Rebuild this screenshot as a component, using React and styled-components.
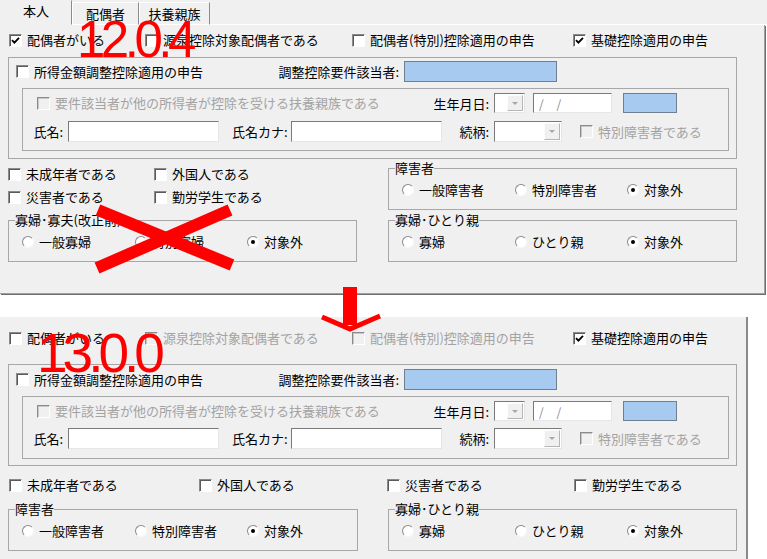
import React from 'react'
import styled, { createGlobalStyle } from 'styled-components'

const GlobalStyle = createGlobalStyle`
  html, body { margin: 0; padding: 0; background: #fff; }
  body {
    font-family: "Noto Sans CJK JP", "Noto Sans", sans-serif;
    font-size: 13px;
    color: #000;
  }
`

function CheckMark() {
  return (
    <svg width="9" height="9" viewBox="0 0 9 9">
      <path d="M1 4.2 L3.4 6.6 L8 1.8" fill="none" stroke="#000" strokeWidth="1.9" />
    </svg>
  )
}

function Check({ checked, disabled, children }) {
  return (
    <CheckItem $disabled={disabled}>
      <CheckBox $disabled={disabled}>{checked && <CheckMark />}</CheckBox>
      {children}
    </CheckItem>
  )
}

function Radio({ on, children }) {
  return (
    <CheckItem>
      <RadioDot $on={on} />
      {children}
    </CheckItem>
  )
}

function RadioGroup({ title, items, selected, mt }) {
  return (
    <Group $mt={mt}>
      <Legend>{title}</Legend>
      <Line $cols="113px 112px auto" $pl={13} $mt={8}>
        {items.map((it, i) => (
          <Radio key={it} on={i === selected}>{it}</Radio>
        ))}
      </Line>
    </Group>
  )
}

// 所得金額調整控除 block (same in both versions, spacing differs a bit)
function AdjustFrame({ v13 }) {
  return (
    <Frame $mt={v13 ? 19 : 10} $pad={v13 ? '4px 0 6px 0' : '3px 0 7px 0'}>
      <Line $cols="257px 131px 153px" $h={21} $pl={7}>
        <Check>所得金額調整控除適用の申告</Check>
        <Caption>調整控除要件該当者:</Caption>
        <BlueBox $w={153} />
      </Line>
      <InnerFrame $pad={v13 ? '4px 0 9px 0' : '4px 0 8px 0'}>
        <Line $cols="390px 67px 39px 90px 54px" $h={20} $pl={14}>
          <Check disabled>要件該当者が他の所得者が控除を受ける扶養親族である</Check>
          <Caption>生年月日:</Caption>
          <Combo $w={31}><ComboButton /></Combo>
          <TextBox $w={79}><DateMask>/ /</DateMask></TextBox>
          <BlueBox $w={54} />
        </Line>
        <Line $cols="35px 164px 59px 164px 39px 86px auto" $h={21} $pl={10} $mt={v13 ? 7 : 8}>
          <Caption>氏名:</Caption>
          <TextBox $w={151} />
          <Caption>氏名カナ:</Caption>
          <TextBox $w={151} />
          <Caption>続柄:</Caption>
          <Combo $w={68}><ComboButton /></Combo>
          <Check disabled>特別障害者である</Check>
        </Line>
      </InnerFrame>
    </Frame>
  )
}

export default function App() {
  return (
    <>
      <GlobalStyle />
      <Canvas>
        <TopPanel>
          <TabStrip>
            <Tab $w={72} $active>本人</Tab>
            <Tab $w={67}>配偶者</Tab>
            <Tab $w={71}>扶養親族</Tab>
            <TabFiller />
          </TabStrip>
          <Page>
            <Line $cols="136px 207px 221px auto" $pl={1} $mt={8}>
              <Check checked>配偶者がいる</Check>
              <Check>源泉控除対象配偶者である</Check>
              <Check>配偶者(特別)控除適用の申告</Check>
              <Check checked>基礎控除適用の申告</Check>
            </Line>
            <AdjustFrame />
            <Lower $cols="349px 349px" $gap={31}>
              <Column>
                <Line $cols="146px auto" $mt={8}>
                  <Check>未成年者である</Check>
                  <Check>外国人である</Check>
                </Line>
                <Line $cols="146px auto" $mt={9}>
                  <Check>災害者である</Check>
                  <Check>勤労学生である</Check>
                </Line>
                <RadioGroup mt={9} title="寡婦･寡夫(改正前)" items={['一般寡婦', '特別寡婦', '対象外']} selected={2} />
              </Column>
              <Column>
                <RadioGroup mt={2} title="障害者" items={['一般障害者', '特別障害者', '対象外']} selected={2} />
                <RadioGroup mt={3} title="寡婦･ひとり親" items={['寡婦', 'ひとり親', '対象外']} selected={2} />
              </Column>
            </Lower>
          </Page>
        </TopPanel>

        <BottomPanel>
          <Line $cols="136px 207px 221px auto" $pl={1} $mt={14}>
            <Check>配偶者がいる</Check>
            <Check disabled>源泉控除対象配偶者である</Check>
            <Check disabled>配偶者(特別)控除適用の申告</Check>
            <Check checked>基礎控除適用の申告</Check>
          </Line>
          <AdjustFrame v13 />
          <Line $cols="190px 188px 187px auto" $pl={1} $mt={12}>
            <Check>未成年者である</Check>
            <Check>外国人である</Check>
            <Check>災害者である</Check>
            <Check>勤労学生である</Check>
          </Line>
          <Lower $cols="350px 349px" $gap={30} $mt={10}>
            <RadioGroup title="障害者" items={['一般障害者', '特別障害者', '対象外']} selected={2} />
            <RadioGroup title="寡婦･ひとり親" items={['寡婦', 'ひとり親', '対象外']} selected={2} />
          </Lower>
        </BottomPanel>

        <Version $left={77} $top={14} $size={51} $ls={-4.5}>12.0.4</Version>
        <Version $left={37} $top={326} $size={55} $ls={-5}>13.0.0</Version>
        <CrossMark width="156" height="72" viewBox="0 0 156 72">
          <line x1="10" y1="8" x2="144" y2="63" stroke="#ff0000" strokeWidth="12" />
          <line x1="142" y1="8" x2="9" y2="66" stroke="#ff0000" strokeWidth="12" />
        </CrossMark>
        <DownArrow width="66" height="48" viewBox="0 0 66 48">
          <rect x="25" y="2" width="14" height="38" fill="#ff0000" />
          <polyline points="4,32 32,44 62,31" fill="none" stroke="#ff0000" strokeWidth="5" />
        </DownArrow>
      </Canvas>
    </>
  )
}

const Canvas = styled.div`
  position: relative;
  width: 767px;
  height: 559px;
  overflow: hidden;
  background: #fff;
`

const TopPanel = styled.section`
  height: 294px;
  display: flex;
  flex-direction: column;
`

const TabStrip = styled.div`
  display: flex;
  align-items: flex-end;
  height: 25px;
  background: #f0f0f0;
`

const Tab = styled.div`
  box-sizing: border-box;
  width: ${p => p.$w}px;
  height: ${p => (p.$active ? 25 : 23)}px;
  display: flex;
  align-items: center;
  justify-content: center;
  padding-bottom: ${p => (p.$active ? 4 : 0)}px;
  border-top: 1px solid ${p => (p.$active ? '#f0f0f0' : '#fff')};
  border-left: 1px solid ${p => (p.$active ? '#f0f0f0' : '#fff')};
  border-right: 1px solid #8c8c8c;
  border-bottom: 1px solid ${p => (p.$active ? '#f0f0f0' : '#fff')};
  background: #f0f0f0;
`

const TabFiller = styled.div`
  flex: 1;
  align-self: stretch;
  border-bottom: 1px solid #fff;
`

const Page = styled.div`
  flex: 1;
  box-sizing: border-box;
  width: 765px;
  background: #f0f0f0;
  border-right: 1px solid #a0a0a0;
  border-bottom: 1px solid #a0a0a0;
  box-shadow: 1px 1px 0 #6e6e6e;
  padding-left: 8px;
`

const BottomPanel = styled.section`
  display: flow-root;
  box-sizing: border-box;
  margin-top: 23px;
  width: 748px;
  height: 242px;
  background: #f0f0f0;
  border-right: 2px solid #8a8a8a;
  padding-left: 8px;
`

const Line = styled.div`
  display: grid;
  grid-template-columns: ${p => p.$cols};
  align-items: center;
  height: ${p => p.$h ?? 14}px;
  margin-top: ${p => p.$mt ?? 0}px;
  padding-left: ${p => p.$pl ?? 0}px;
  white-space: nowrap;
`

const Lower = styled.div`
  display: grid;
  grid-template-columns: ${p => p.$cols};
  column-gap: ${p => p.$gap}px;
  margin-top: ${p => p.$mt ?? 0}px;
  align-items: start;
`

const Column = styled.div`
  display: flex;
  flex-direction: column;
`

const Frame = styled.div`
  box-sizing: border-box;
  width: 729px;
  margin-top: ${p => p.$mt}px;
  padding: ${p => p.$pad};
  border: 1px solid #a7a7a7;
`

const InnerFrame = styled.div`
  box-sizing: border-box;
  width: 707px;
  margin: 6px 0 0 13px;
  padding: ${p => p.$pad};
  border: 1px solid #a7a7a7;
`

const Group = styled.fieldset`
  box-sizing: border-box;
  min-width: 0;
  margin: ${p => p.$mt ?? 0}px 0 0 0;
  padding: 0 0 12px 0;
  border: 1px solid #a7a7a7;
`

const Legend = styled.legend`
  margin-left: 6px;
  padding: 0;
  font-size: 13px;
  line-height: 14px;
`

const CheckItem = styled.label`
  display: flex;
  align-items: center;
  gap: 5px;
  line-height: 14px;
  color: ${p => (p.$disabled ? '#a3a3a3' : '#000')};
`

const CheckBox = styled.span`
  flex: none;
  box-sizing: border-box;
  width: 13px;
  height: 13px;
  display: flex;
  align-items: center;
  justify-content: center;
  border: 1px solid;
  border-color: #8a8a8a #fff #fff #8a8a8a;
  box-shadow: inset 1px 1px 0 ${p => (p.$disabled ? '#c8c8c8' : '#5a5a5a')};
  background: ${p => (p.$disabled ? '#f0f0f0' : '#fff')};
`

const RadioDot = styled.span`
  flex: none;
  box-sizing: border-box;
  width: 12px;
  height: 12px;
  border-radius: 50%;
  border: 1px solid;
  border-color: #8a8a8a #f8f8f8 #f8f8f8 #8a8a8a;
  background: #fff;
  display: flex;
  align-items: center;
  justify-content: center;
  &::after {
    content: '';
    width: 4px;
    height: 4px;
    border-radius: 50%;
    background: ${p => (p.$on ? '#000' : 'transparent')};
  }
`

const Caption = styled.span`
  text-align: right;
  padding-right: 5px;
  white-space: nowrap;
`

const TextBox = styled.div`
  box-sizing: border-box;
  width: ${p => p.$w}px;
  height: 100%;
  border: 1px solid;
  border-color: #7a7a7a #e6e6e6 #e6e6e6 #7a7a7a;
  background: #fff;
  display: flex;
  align-items: center;
`

const DateMask = styled.span`
  padding-left: 5px;
  font-size: 12px;
  letter-spacing: 5px;
  color: #8a8a8a;
`

const BlueBox = styled.div`
  box-sizing: border-box;
  width: ${p => p.$w}px;
  height: 100%;
  background: #a6caf0;
  border: 1px solid #6f7f8f;
`

const Combo = styled.div`
  box-sizing: border-box;
  width: ${p => p.$w}px;
  height: 100%;
  border: 1px solid;
  border-color: #7a7a7a #e6e6e6 #e6e6e6 #7a7a7a;
  background: #fff;
  display: flex;
  justify-content: flex-end;
  padding: 1px;
`

const ComboButton = styled.span`
  box-sizing: border-box;
  width: 16px;
  background: #f0f0f0;
  border: 1px solid;
  border-color: #fbfbfb #b5b5b5 #b5b5b5 #fbfbfb;
  display: flex;
  align-items: center;
  justify-content: center;
  &::after {
    content: '';
    border-left: 3px solid transparent;
    border-right: 3px solid transparent;
    border-top: 3px solid #a8a8a8;
  }
`

const Version = styled.div`
  position: absolute;
  left: ${p => p.$left}px;
  top: ${p => p.$top}px;
  font-family: "Liberation Sans", Arial, sans-serif;
  font-size: ${p => p.$size}px;
  line-height: 1;
  letter-spacing: ${p => p.$ls}px;
  color: #ff0000;
  white-space: nowrap;
`

const CrossMark = styled.svg`
  position: absolute;
  left: 88px;
  top: 202px;
`

const DownArrow = styled.svg`
  position: absolute;
  left: 318px;
  top: 285px;
`
